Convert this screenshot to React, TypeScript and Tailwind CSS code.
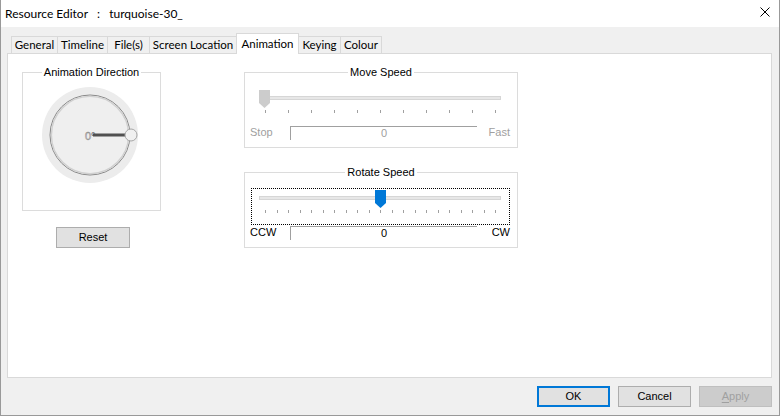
import React from 'react';

type Tab = { label: string; cls: string; active?: boolean };

const tabs: Tab[] = [
  { label: 'General', cls: 'w-[46px] border-l border-t' },
  { label: 'Timeline', cls: 'w-[50px] border-l border-t' },
  { label: 'File(s)', cls: 'w-[42px] border-l border-t' },
  { label: 'Screen Location', cls: 'w-[87px] border-l border-t' },
  { label: 'Animation', cls: 'w-[63px] border-l border-t border-r', active: true },
  { label: 'Keying', cls: 'w-[41px] border-t' },
  { label: 'Colour', cls: 'w-[42px] border-l border-t border-r' },
];

function TitleBar() {
  return (
    <div className="h-[27px] bg-white flex items-start justify-between shrink-0">
      <span className="pl-[4px] pt-[6px] leading-[16px] text-[12px] whitespace-pre font-['Lato','Noto_Sans',sans-serif]">
        Resource Editor   :   turquoise-30_
      </span>
      <svg width="10" height="10" viewBox="0 0 10 10" className="mt-[7px] mr-[9px]">
        <path d="M0.5 0.5L9.5 9.5M9.5 0.5L0.5 9.5" stroke="#000" strokeWidth="1" />
      </svg>
    </div>
  );
}

function Tabs() {
  return (
    <div className="relative z-10 mt-[6px] ml-[10px] h-[20px] flex items-end shrink-0 text-[11.5px] font-['Lato','Noto_Sans',sans-serif]">
      {tabs.map((t) => (
        <div
          key={t.label}
          className={
            t.active
              ? `${t.cls} h-[21px] -mb-px bg-white border-[#d9d9d9] flex items-center justify-center`
              : `${t.cls} h-[17px] bg-[#f0f0f0] border-[#d9d9d9] flex items-center justify-center`
          }
        >
          {t.label}
        </div>
      ))}
    </div>
  );
}

function Dial() {
  return (
    <svg width="100" height="100" viewBox="0 0 100 100" className="ml-[17px] mt-[6px]">
      <circle cx="50" cy="50" r="48" fill="#ececec" />
      <circle cx="50" cy="50" r="40" fill="#efefef" stroke="#8a8a8a" strokeWidth="1" />
      <circle cx="50" cy="50" r="38.6" fill="none" stroke="#d0d0d0" strokeWidth="1.4" />
      <text
        x="45"
        y="55"
        fontSize="11"
        fontFamily="Liberation Sans, Arial, sans-serif"
        fill="#ffffff"
        stroke="#7a7a7a"
        strokeWidth="0.5"
      >
        0°
      </text>
      <line x1="53" y1="50" x2="86" y2="50" stroke="#505050" strokeWidth="3" />
      <circle cx="91" cy="50" r="6" fill="#f0f0f0" stroke="#a6a6a6" strokeWidth="1" />
    </svg>
  );
}

type SliderProps = {
  title: string;
  ticks: number;
  thumbLeft: string;
  thumbColor: string;
  focused?: boolean;
  left: string;
  right: string;
  textCls: string;
  className?: string;
};

function SliderGroup({ title, ticks, thumbLeft, thumbColor, focused, left, right, textCls, className }: SliderProps) {
  return (
    <fieldset className={`w-[274px] h-[83px] border border-[#dcdcdc] ${className ?? ''}`}>
      <legend className="mx-auto px-[2px] leading-[14px]">{title}</legend>
      <div
        className={`relative ml-[6px] mt-[9px] w-[259px] h-[37px] border ${
          focused ? 'border-dotted border-black' : 'border-transparent'
        }`}
      >
        <div className="ml-[7px] mt-[7px] w-[242px] h-[4px] bg-[#e7e7e7] border border-[#d6d6d6]" />
        <div className="ml-[13px] mt-[10px] w-[231px] h-[3px] flex justify-between">
          {Array.from({ length: ticks }).map((_, i) => (
            <div key={i} className="w-px h-[3px] bg-[#a0a0a0]" />
          ))}
        </div>
        <svg width="11" height="18" viewBox="0 0 11 18" className={`absolute top-px ${thumbLeft}`}>
          <path d="M0 0H11V13L5.5 18L0 13Z" fill={thumbColor} />
        </svg>
      </div>
      <div className={`ml-[5px] flex items-start ${textCls}`}>
        <span className="w-[40px] leading-[13px] pt-[1px]">{left}</span>
        <div className="mt-px w-[187px] h-[14px] border-l border-t border-[#a0a0a0] flex justify-center">
          <span className="leading-[13px]">0</span>
        </div>
        <span className="flex-1 text-right pr-[7px] leading-[13px] pt-[1px]">{right}</span>
      </div>
    </fieldset>
  );
}

export default function App() {
  return (
    <div className="w-[780px] h-[416px] flex flex-col bg-[#f0f0f0] border-x border-b border-[#999999] text-[11px] text-black overflow-hidden font-['Liberation_Sans',Arial,sans-serif]">
      <TitleBar />
      <Tabs />

      <div className="ml-[6px] w-[765px] h-[325px] shrink-0 bg-white border border-[#d9d9d9] flex items-start pl-[14px] pt-[11px]">
        <div className="w-[139px] flex flex-col">
          <fieldset className="w-[139px] h-[146px] border border-[#dcdcdc]">
            <legend className="mx-auto px-[2px] leading-[14px]">Animation Direction</legend>
            <Dial />
          </fieldset>
          <button className="ml-[34px] mt-[16px] w-[74px] h-[21px] bg-[#e1e1e1] border border-[#adadad] leading-[13px]">
            Reset
          </button>
        </div>

        <div className="ml-[83px] flex flex-col">
          <SliderGroup
            title="Move Speed"
            ticks={11}
            thumbLeft="left-[7px]"
            thumbColor="#cccccc"
            left="Stop"
            right="Fast"
            textCls="text-[#a0a0a0]"
          />
          <SliderGroup
            title="Rotate Speed"
            ticks={21}
            thumbLeft="left-[123px]"
            thumbColor="#0078d7"
            focused
            left="CCW"
            right="CW"
            textCls="text-black"
            className="mt-[17px]"
          />
        </div>
      </div>

      <div className="mt-[8px] flex justify-end gap-[8px] pr-[7px]">
        <button className="w-[73px] h-[21px] bg-[#e1e1e1] border-2 border-[#0078d7] leading-[13px]">OK</button>
        <button className="w-[73px] h-[21px] bg-[#e1e1e1] border border-[#adadad] leading-[13px]">Cancel</button>
        <button className="w-[73px] h-[21px] bg-[#cccccc] border border-[#bfbfbf] text-[#a0a0a0] leading-[13px]">
          <span className="underline underline-offset-2">A</span>pply
        </button>
      </div>
    </div>
  );
}
